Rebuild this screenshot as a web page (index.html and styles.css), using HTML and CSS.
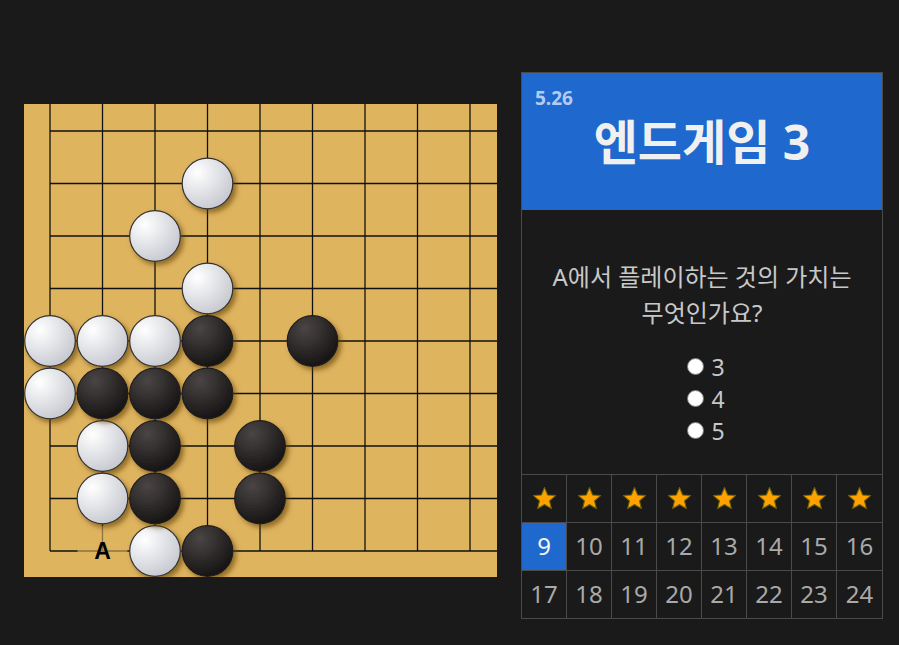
FILE: index.html
```html
<!DOCTYPE html>
<html lang="ko">
<head>
    <meta charset="UTF-8">
    <meta name="viewport" content="width=device-width, initial-scale=1.0">
    <title>엔드게임 3</title>
    <link rel="stylesheet" href="styles.css">
</head>
<body>
    <div class="page">
        <div class="board">
            <svg id="boardSvg" width="473" height="473" viewBox="0 0 473 473">
                <defs>
                    <radialGradient id="whiteGrad" cx="30%" cy="28%" r="75%">
                        <stop offset="0%" stop-color="#ffffff"/>
                        <stop offset="100%" stop-color="#c9cbd2"/>
                    </radialGradient>
                    <radialGradient id="blackGrad" cx="35%" cy="25%" r="75%">
                        <stop offset="0%" stop-color="#4b4545"/>
                        <stop offset="100%" stop-color="#171515"/>
                    </radialGradient>
                    <filter id="shadow" x="-30%" y="-30%" width="170%" height="170%">
                        <feDropShadow dx="3" dy="3.5" stdDeviation="2.6" flood-color="#5a3c00" flood-opacity="0.6"/>
                    </filter>
                </defs>
                <g id="grid" stroke="#111" stroke-width="1.3"></g>
                <circle cx="78.5" cy="447" r="25" fill="#dfb45f" opacity="0.6"/>
                <text class="label" x="78.5" y="455" text-anchor="middle">A</text>
                <g id="stones"></g>
            </svg>
        </div>

        <div class="panel">
            <div class="header">
                <div class="date">5.26</div>
                <h1>엔드게임 3</h1>
            </div>

            <div class="question">
                <p>A에서 플레이하는 것의 가치는<br>무엇인가요?</p>
                <div class="options">
                    <label class="option"><input type="radio" name="answer"> 3</label>
                    <label class="option"><input type="radio" name="answer"> 4</label>
                    <label class="option"><input type="radio" name="answer"> 5</label>
                </div>
            </div>

            <div class="levels" id="levels"></div>
        </div>
    </div>

    <script>
        const step = 52.5, ox = 26, oy = 27;
        const ns = "http://www.w3.org/2000/svg";

        const stones = [
            [3,1,"w"],[2,2,"w"],[3,3,"w"],[0,4,"w"],[1,4,"w"],[2,4,"w"],[0,5,"w"],[1,6,"w"],[1,7,"w"],[2,8,"w"],
            [3,4,"b"],[5,4,"b"],[1,5,"b"],[2,5,"b"],[3,5,"b"],[2,6,"b"],[4,6,"b"],[2,7,"b"],[4,7,"b"],[3,8,"b"]
        ];

        function drawGrid() {
            let grid = document.getElementById("grid");
            for (let i = 0; i < 9; i++) {
                let v = document.createElementNS(ns, "line");
                let x = ox + step * i;
                v.setAttribute("x1", x); v.setAttribute("x2", x);
                v.setAttribute("y1", 0); v.setAttribute("y2", oy + step * 8);
                grid.appendChild(v);

                let h = document.createElementNS(ns, "line");
                let y = oy + step * i;
                h.setAttribute("x1", ox); h.setAttribute("x2", 473);
                h.setAttribute("y1", y); h.setAttribute("y2", y);
                grid.appendChild(h);
            }
        }

        function drawStones() {
            let g = document.getElementById("stones");
            stones.forEach(([i, j, c]) => {
                let s = document.createElementNS(ns, "circle");
                s.setAttribute("cx", ox + step * i);
                s.setAttribute("cy", oy + step * j);
                s.setAttribute("r", 25.3);
                s.setAttribute("fill", c === "w" ? "url(#whiteGrad)" : "url(#blackGrad)");
                s.setAttribute("stroke", c === "w" ? "#333" : "#1e1c1c");
                s.setAttribute("stroke-width", 1.2);
                s.setAttribute("filter", "url(#shadow)");
                g.appendChild(s);
            });
        }

        function drawLevels() {
            let levels = document.getElementById("levels");
            let star = '<svg width="25" height="25" viewBox="0 0 24 24"><polygon points="12,1.5 15,8.6 22.6,9.2 16.8,14.2 18.6,21.7 12,17.7 5.4,21.7 7.2,14.2 1.4,9.2 9,8.6" fill="#ffa200" stroke="#6e6408" stroke-width="1" stroke-linejoin="round"/></svg>';
            for (let n = 1; n <= 8; n++) {
                let cell = document.createElement("div");
                cell.className = "cell star";
                cell.innerHTML = star;
                levels.appendChild(cell);
            }
            for (let n = 9; n <= 24; n++) {
                let cell = document.createElement("div");
                cell.className = n === 9 ? "cell current" : "cell";
                cell.textContent = n;
                levels.appendChild(cell);
            }
        }

        drawGrid();
        drawStones();
        drawLevels();
    </script>
</body>
</html>
```

FILE: styles.css
```css
body { margin: 0; background: #1a1a1a; font-family: "Noto Sans", "Noto Sans CJK KR", sans-serif; }
.page { display: flex; align-items: flex-start; gap: 24px; padding: 72px 0 0 24px; }

.board { margin-top: 32px; width: 473px; height: 473px; background: #dfb45f; }
.board svg { display: block; }
.label { font-family: "Liberation Sans", sans-serif; font-weight: bold; font-size: 23px; fill: #000; }

.panel { width: 360px; border: 1px solid #4a4a4a; }

.header { height: 137px; background: #1f68cd; padding: 14px 0 0 13px; box-sizing: border-box; }
.date { font-size: 19px; font-weight: bold; color: #b3cbef; line-height: 22px; }
.header h1 { margin: 3px 0 0; padding-right: 13px; text-align: center; font-size: 48px; line-height: 60px; color: #f0f0f0; font-weight: bold; }

.question { height: 264px; box-sizing: border-box; padding-top: 49px; text-align: center; color: #c8c8c8; }
.question p { margin: 0; font-size: 24px; line-height: 36px; }
.options { margin-top: 20px; display: flex; flex-direction: column; align-items: center; }
.option { display: flex; align-items: center; gap: 7px; font-size: 23px; line-height: 32px; color: #c8c8c8; padding-left: 8px; }
.option input { appearance: none; width: 17px; height: 17px; margin: 0 0 2px; border-radius: 50%; background: #fff; border: 1px solid #777; box-sizing: border-box; }

.levels { display: grid; grid-template-columns: repeat(8, 1fr); border-top: 1px solid #4a4a4a; }
.cell { height: 45px; padding-bottom: 2px; display: flex; align-items: center; justify-content: center; border-right: 1px solid #4a4a4a; border-bottom: 1px solid #4a4a4a; font-size: 24px; line-height: 28px; color: #a9a9a9; }
.cell:nth-child(8n) { border-right: none; }
.cell:nth-last-child(-n+8) { border-bottom: none; }
.cell.star { height: 47px; padding-bottom: 0; }
.cell.star svg { display: block; }
.cell.current { background: #1f68cd; color: #f4f4f4; }
```
